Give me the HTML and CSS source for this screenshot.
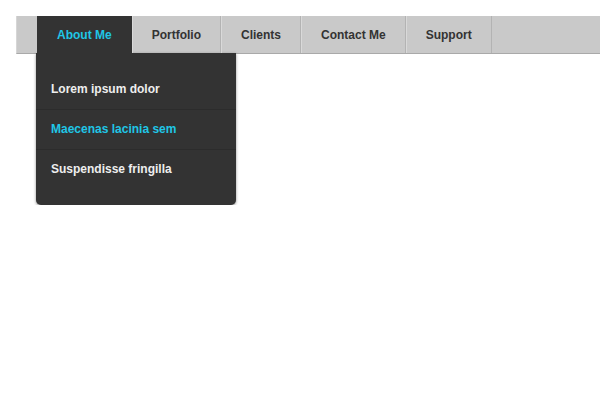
FILE: index.html
```html
<!DOCTYPE html>
<html lang="en">
<head>
    <meta charset="UTF-8">
    <title>Dropdown Menu</title>
    <link rel="stylesheet" href="styles.css">
</head>
<body>
    <nav class="menu">
        <a class="menu-item active" href="#">About Me</a>
        <a class="menu-item" href="#">Portfolio</a>
        <a class="menu-item" href="#">Clients</a>
        <a class="menu-item" href="#">Contact Me</a>
        <a class="menu-item" href="#">Support</a>
    </nav>
    <div class="dropdown">
        <a class="dropdown-link" href="#">Lorem ipsum dolor</a>
        <a class="dropdown-link current" href="#">Maecenas lacinia sem</a>
        <a class="dropdown-link" href="#">Suspendisse fringilla</a>
    </div>
</body>
</html>
```
FILE: styles.css
```css
body {
    margin: 0;
    background: #fff;
    font-family: "Liberation Sans", Arial, sans-serif;
    font-size: 12px;
    font-weight: bold;
}

a {
    text-decoration: none;
    color: inherit;
}

.menu {
    display: flex;
    margin: 16px 0 0 16px;
    padding-left: 20px;
    background: #c9c9c9;
    border-left: 1px solid #d6d6d6;
    border-bottom: 1px solid #a9a9a9;
}

.menu-item {
    padding: 1px 19px 0 20px;
    line-height: 36px;
    color: #333;
    border-right: 1px solid #b3b3b3;
    box-shadow: inset 1px 0 0 #d9d9d9;
}

.menu-item.active {
    background: #333;
    color: #20c6e6;
    border-right-color: #333;
    box-shadow: none;
}

.dropdown {
    width: 200px;
    margin: -1px 0 0 36px;
    padding: 16px 0;
    background: #333;
    border-radius: 0 0 5px 5px;
    box-shadow: 0 1px 3px rgba(0, 0, 0, 0.45);
}

.dropdown-link {
    display: block;
    padding: 0 15px;
    line-height: 39px;
    color: #eee;
}

.dropdown-link + .dropdown-link {
    border-top: 1px solid #2c2c2c;
}

.dropdown-link:first-child {
    line-height: 40px;
}

.dropdown-link.current {
    color: #20c6e6;
}
```
